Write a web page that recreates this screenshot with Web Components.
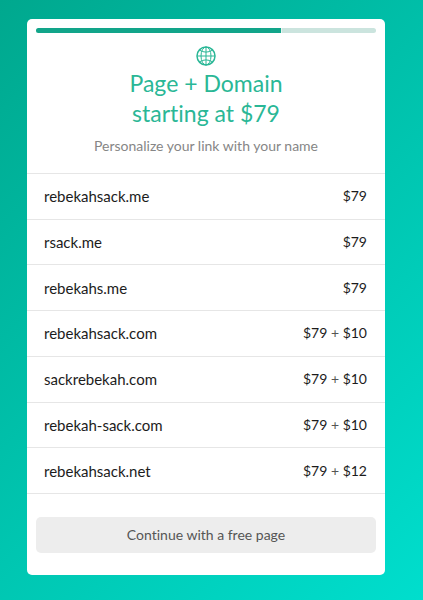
<!DOCTYPE html>
<html lang="en">
<head>
<meta charset="utf-8">
<meta name="viewport" content="width=device-width, initial-scale=1">
<title>Page + Domain</title>
<style>
html { min-height: 100%; background: linear-gradient(135deg, #00a88e 0%, #00decd 100%); }
body { margin: 0; padding: 19px 38px 25px 27px; font-family: Lato, "Open Sans", sans-serif; font-size: 15px; font-variant-ligatures: none; color: #1c1c1c; }
</style>
</head>
<body>
<offer-card>
  <step-progress slot="progress" value="72"></step-progress>
  <offer-header>
    <globe-icon slot="icon"></globe-icon>
    <span slot="title">Page + Domain<br>starting at $79</span>
    <span slot="subtitle">Personalize your link with your name</span>
  </offer-header>
  <domain-list></domain-list>
  <plain-button slot="action">Continue with a free page</plain-button>
</offer-card>
<script>
class BaseElement extends HTMLElement {
  connectedCallback() {
    if (!this.shadowRoot) this.attachShadow({ mode: "open" }).innerHTML = this.view();
  }
}

customElements.define("offer-card", class extends BaseElement {
  view() {
    return `<style>
      :host { display: flex; flex-direction: column; background: #fff; border-radius: 5px; }
      .progress { padding: 9px 9px 0; }
      .action { padding: 23px 9px 22px; }
    </style>
    <div class="progress"><slot name="progress"></slot></div>
    <slot></slot>
    <div class="action"><slot name="action"></slot></div>`;
  }
});

customElements.define("step-progress", class extends BaseElement {
  view() {
    const value = Number(this.getAttribute("value"));
    return `<style>
      :host { display: block; }
      .track { height: 5px; border-radius: 3px; overflow: hidden; background: #cbe4de; }
      .fill { height: 100%; width: ${value}%; background: #12a58a; border-right: 1px solid #e6f4f0; }
    </style>
    <div class="track" role="progressbar" aria-label="Setup progress" aria-valuemin="0" aria-valuemax="100" aria-valuenow="${value}"><div class="fill"></div></div>`;
  }
});

customElements.define("globe-icon", class extends BaseElement {
  view() {
    return `<style>
      :host { display: block; color: #2ab796; }
      svg { display: block; width: 20px; height: 20px; }
    </style>
    <svg viewBox="0 0 20 20" fill="none" stroke="currentColor" aria-hidden="true">
      <circle cx="10" cy="10" r="9" stroke-width="1.5"/>
      <g stroke-width="1"><ellipse cx="10" cy="10" rx="5" ry="9"/>
      <path d="M10 1v18M1 10h18M3.5 4.2Q10 8 16.5 4.2M3.5 15.8Q10 12 16.5 15.8"/></g>
    </svg>`;
  }
});

customElements.define("offer-header", class extends BaseElement {
  view() {
    return `<style>
      :host { display: flex; flex-direction: column; align-items: center; padding: 13px 9px 17px; text-align: center; }
      h1 { margin: 2px 0 0; font-size: 23px; line-height: 30px; font-weight: 400; color: #2ab796; }
      p { margin: 8px 0 0; font-size: 14px; line-height: 20px; color: #868686; }
    </style>
    <slot name="icon"></slot>
    <h1><slot name="title"></slot></h1>
    <p><slot name="subtitle"></slot></p>`;
  }
});

customElements.define("domain-list", class extends BaseElement {
  view() {
    const domains = [
      ["rebekahsack.me", "$79"],
      ["rsack.me", "$79"],
      ["rebekahs.me", "$79"],
      ["rebekahsack.com", "$79", "$10"],
      ["sackrebekah.com", "$79", "$10"],
      ["rebekah-sack.com", "$79", "$10"],
      ["rebekahsack.net", "$79", "$12"]
    ];
    const rows = domains.map(([name, page, extra]) =>
      `<tr><th scope="row">${name}</th><td>${page}${extra ? ` <span>+</span> ${extra}` : ""}</td></tr>`).join("");
    return `<style>
      :host { display: block; border-top: 1px solid #e6e6e6; }
      table { width: 100%; height: 320px; border-spacing: 0; }
      th, td { padding: 0 18px 0 17px; border-bottom: 1px solid #e6e6e6; font-size: 15px; line-height: 20px; font-weight: 400; text-align: left; }
      td { font-size: 14px; text-align: right; }
      span { color: #555; }
    </style>
    <table aria-label="Available domains"><tbody>${rows}</tbody></table>`;
  }
});

customElements.define("plain-button", class extends BaseElement {
  view() {
    return `<style>
      :host { display: block; }
      button { display: block; width: 100%; padding: 8px; border: 0; border-radius: 5px; background: #ededed; color: #555; font: inherit; font-size: 14px; line-height: 20px; cursor: pointer; }
    </style>
    <button type="button"><slot></slot></button>`;
  }
});
</script>
</body>
</html>
